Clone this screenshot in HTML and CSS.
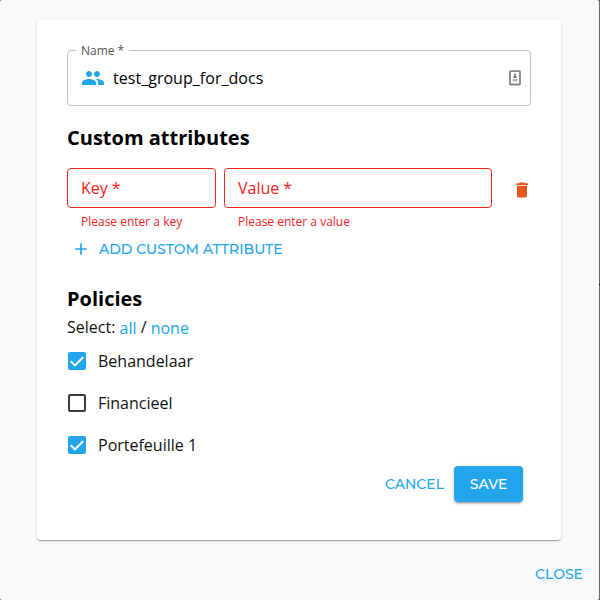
FILE: index.html
```
<!DOCTYPE html>
<html lang="en">
<head>
<meta charset="utf-8">
<title>Edit group</title>
<link rel="stylesheet" href="styles.css">
</head>
<body>
<main class="dialog">
  <form class="card">
    <div class="field name-field">
      <span class="field-label">Name<span class="star">*</span></span>
      <svg class="icon" viewBox="0 0 24 24"><path d="M16 11c1.66 0 2.99-1.34 2.99-3S17.66 5 16 5s-3 1.34-3 3 1.34 3 3 3zm-8 0c1.66 0 2.99-1.34 2.99-3S9.66 5 8 5 5 6.340 5 8s1.340 3 3 3zm0 2c-2.330 0-7 1.170-7 3.500V19h14v-2.500c0-2.330-4.670-3.500-7-3.500zm8 0c-.29 0-.62.02-.97.05 1.160.84 1.970 1.970 1.970 3.450V19h6v-2.500c0-2.330-4.670-3.500-7-3.500z"/></svg>
      <span class="name-value">test_group_for_docs</span>
      <svg class="autofill" viewBox="0 0 12 16"><rect x="1" y="1.200" width="10" height="13.300" rx=".5"/><path class="person" d="M5.200 3.500h1.600v2l1.200 2.500H4l1.200-2.500z"/><path class="lines" d="M3.500 9h5v2.500h-5z"/></svg>
    </div>

    <h2 class="heading">Custom attributes</h2>
    <div class="attribute">
      <div class="key">
        <div class="field error">Key<span class="star">*</span></div>
        <p class="helper">Please enter a key</p>
      </div>
      <div class="value">
        <div class="field error">Value<span class="star">*</span></div>
        <p class="helper">Please enter a value</p>
      </div>
      <svg class="trash" viewBox="0 0 24 24"><path d="M6 19c0 1.100.9 2 2 2h8c1.100 0 2-.9 2-2V7H6v12zM19 4h-3.500l-1-1h-5l-1 1H5v2h14V4z"/></svg>
    </div>
    <div class="button add">
      <svg class="plus" viewBox="0 0 24 24"><path d="M19 13h-6v6h-2v-6H5v-2h6V5h2v6h6v2z"/></svg>
      <span class="add-text">ADD CUSTOM ATTRIBUTE</span>
    </div>

    <h2 class="heading policies">Policies</h2>
    <p class="select">Select: <a class="link">all</a> / <a class="link">none</a></p>
    <div class="option">
      <svg class="box checked" viewBox="0 0 18 18"><rect width="18" height="18" rx="2"/><path d="M2.700 9.200 7 13.400 15.300 5"/></svg>
      <span>Behandelaar</span>
    </div>
    <div class="option">
      <svg class="box" viewBox="0 0 18 18"><rect x="1" y="1" width="16" height="16" rx="1"/></svg>
      <span>Financieel</span>
    </div>
    <div class="option">
      <svg class="box checked" viewBox="0 0 18 18"><rect width="18" height="18" rx="2"/><path d="M2.700 9.200 7 13.400 15.300 5"/></svg>
      <span>Portefeuille 1</span>
    </div>
    <div class="actions">
      <div class="button cancel">CANCEL</div>
      <div class="button save">SAVE</div>
    </div>
  </form>
  <div class="footer"><div class="button close">CLOSE</div></div>
</main>
</body>
</html>
```
FILE: styles.css
```
* { box-sizing: border-box; }
body {
  margin: 0;
  background: #666 linear-gradient(#000, #000) 0 284px / 100% 1px no-repeat;
  font: 16px/24px "Open Sans", "Noto Sans", sans-serif;
  color: #111;
}
h2, p { margin: 0; }
svg { display: block; flex: none; }
.dialog {
  width: 599px;
  height: 600px;
  padding: 20px 0 0 37px;
  background: #f9f9f9;
  border-radius: 2px;
}
.card {
  width: 524px;
  height: 520px;
  padding: 30px;
  background: #fff;
  border-radius: 4px;
  box-shadow: 0 2px 1px -1px rgba(0,0,0,.2), 0 1px 1px rgba(0,0,0,.14), 0 1px 3px rgba(0,0,0,.12);
}
.field {
  display: flex;
  align-items: center;
  border: 1px solid #c0c0c0;
  border-radius: 4px;
}
.star { margin-left: 4px; }
.name-field {
  position: relative;
  height: 56px;
  padding: 0 9px 0 13px;
}
.field-label {
  position: absolute;
  left: 8px;
  top: -8px;
  width: 53px;
  padding-left: 5px;
  background: #fff;
  color: #555;
  font-size: 12px;
  line-height: 16px;
}
.field-label .star { margin-left: 3px; }
.icon { width: 24px; height: 24px; fill: #22a5ea; }
.name-value { flex: 1; margin-left: 8px; letter-spacing: .03px; color: #000; }
.autofill { width: 12px; height: 16px; fill: none; stroke: #858585; stroke-width: 1.8px; }
.person { fill: #777; stroke: none; }
.lines { fill: #b5b5b5; stroke: none; }
.heading {
  margin-top: 18px;
  color: #000;
  font-size: 20px;
  line-height: 28px;
}
.attribute { display: flex; margin-top: 16px; height: 70px; }
.key { flex: none; width: 149px; margin-right: 8px; }
.value { flex: none; width: 268px; }
.error {
  height: 40px;
  padding-left: 13px;
  border-color: #f5211d;
  color: #f5211d;
}
.helper {
  margin: 4px 0 0 14px;
  color: #f5211d;
  font-size: 12px;
  line-height: 20px;
}
.trash { width: 20px; height: 20px; margin: 12px 0 0 20px; fill: #e65719; }
.button {
  color: #22a5ea;
  font: 500 14px/22px Montserrat, Lato, sans-serif;
  white-space: nowrap;
}
.add { display: flex; align-items: center; height: 22px; margin-left: 4px; }
.plus { width: 20px; height: 20px; fill: #22a5ea; }
.add-text { margin-left: 8px; }
.policies { margin-top: 25px; }
.select { margin: 2px 0 1px; }
.link { position: relative; top: 1px; color: #22a5ea; }
.option { display: flex; align-items: center; height: 42px; padding-left: 1px; }
.box { width: 18px; height: 18px; margin-right: 12px; fill: none; stroke: #3b3b3b; stroke-width: 2px; }
.checked rect { fill: #22a5ea; stroke: none; }
.checked path { stroke: #fff; }
.actions { display: flex; justify-content: flex-end; align-items: center; padding-right: 8px; }
.cancel { margin-right: 10px; }
.save {
  width: 69px;
  height: 36px;
  background: #22a5ea;
  border-radius: 4px;
  box-shadow: 0 3px 1px -2px rgba(0,0,0,.2), 0 2px 2px rgba(0,0,0,.14), 0 1px 5px rgba(0,0,0,.12);
  color: #fff;
  line-height: 36px;
  text-align: center;
}
.footer { display: flex; justify-content: flex-end; padding: 23px 16px 0 0; }
```
